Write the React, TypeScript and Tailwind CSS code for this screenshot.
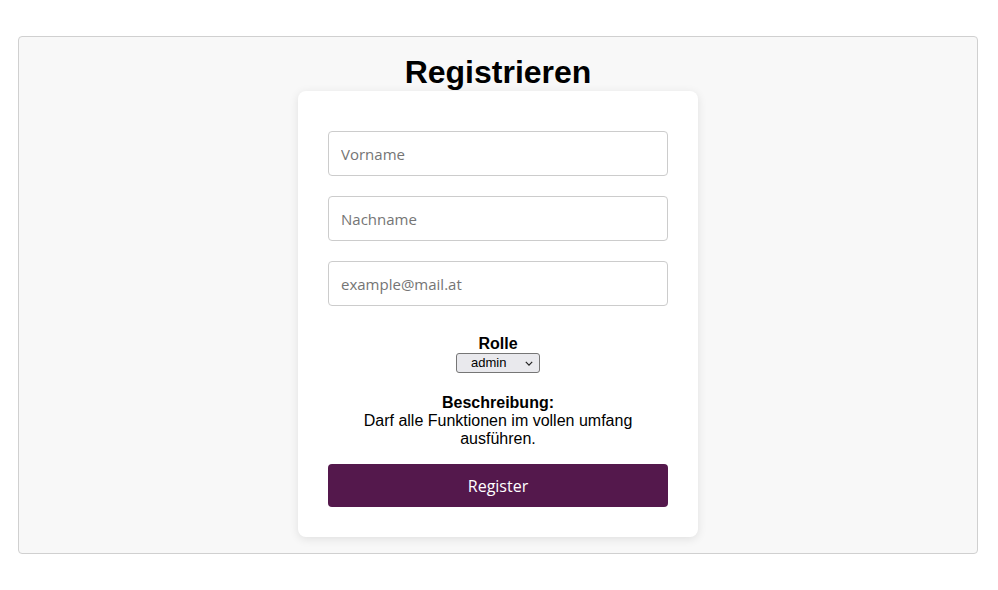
import { useState } from 'react';

const roles: Record<string, string> = {
  admin: 'Darf alle Funktionen im vollen umfang ausführen.',
  user: 'Darf Funktionen eingeschränkt nutzen.',
};

export default function App() {
  const [role, setRole] = useState('admin');

  return (
    <main className="min-h-[590px] bg-white pt-[36px] pl-[18px] pr-[20px] font-['Liberation_Sans',Arial,sans-serif] text-black">
      <section className="flex flex-col items-center rounded-[4px] border border-[#d0d0d0] bg-[#f8f8f8] pt-[17px] pb-[16px]">
        <h1 className="text-[32px] font-bold leading-[37px]">Registrieren</h1>
        <form
          onSubmit={(event) => event.preventDefault()}
          className="flex w-[400px] flex-col rounded-[8px] bg-white px-[30px] pt-[40px] pb-[30px] shadow-[0_2px_10px_rgba(0,0,0,0.1)]"
        >
          <div className="flex flex-col gap-[20px]">
            <input
              placeholder="Vorname"
              className="h-[45px] rounded-[4px] border border-[#cccccc] px-[12px] font-['Open_Sans',sans-serif] text-[15px] outline-none placeholder:text-[#757575]"
            />
            <input
              placeholder="Nachname"
              className="h-[45px] rounded-[4px] border border-[#cccccc] px-[12px] font-['Open_Sans',sans-serif] text-[15px] outline-none placeholder:text-[#757575]"
            />
            <input
              type="email"
              placeholder="example@mail.at"
              className="h-[45px] rounded-[4px] border border-[#cccccc] px-[12px] font-['Open_Sans',sans-serif] text-[15px] outline-none placeholder:text-[#757575]"
            />
          </div>

          <div className="mt-[29px] flex flex-col items-center">
            <label htmlFor="role" className="text-[16px] font-bold leading-[18px]">Rolle</label>
            <div className="relative flex h-[20px]">
              <select
                id="role"
                value={role}
                onChange={(event) => setRole(event.target.value)}
                className="block h-[20px] w-[84px] appearance-none rounded-[3px] border border-[#767676] bg-[#e9e9ed] pl-[14px] text-[13px] leading-[18px] outline-none"
              >
                <option value="admin">admin</option>
                <option value="user">user</option>
              </select>
              <svg
                viewBox="0 0 10 6"
                className="pointer-events-none absolute right-[7px] top-[8px] h-[5px] w-[8px]"
                fill="none"
                stroke="#222"
                strokeWidth="1.5"
              >
                <path d="M1 1l4 4 4-4" />
              </svg>
            </div>
          </div>

          <div className="mx-auto mt-[21px] w-[290px] text-center text-[16px] leading-[18px]">
            <p className="font-bold">Beschreibung:</p>
            <p>{roles[role]}</p>
          </div>

          <button
            type="submit"
            className="mt-[16px] h-[43px] rounded-[4px] bg-[#54184c] font-['Open_Sans',sans-serif] text-[16px] text-white"
          >
            Register
          </button>
        </form>
      </section>
    </main>
  );
}
